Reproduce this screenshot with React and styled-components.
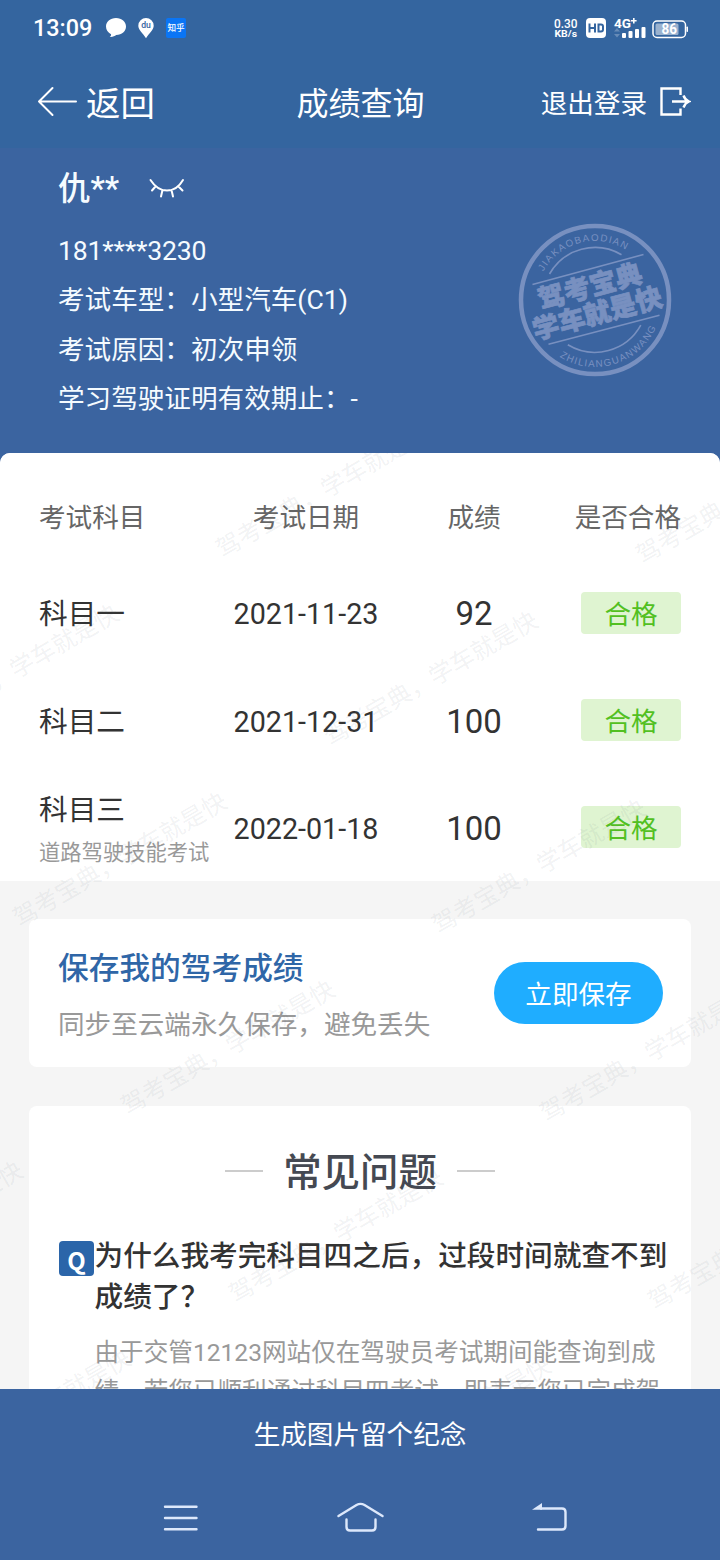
import React from "react";
import styled, { createGlobalStyle } from "styled-components";

const GlobalStyle = createGlobalStyle`
  * { box-sizing: border-box; }
  body {
    margin: 0;
    font-family: Roboto, "Noto Sans CJK SC", sans-serif;
    color: #333;
  }
`;

const Screen = styled.div`
  width: 720px;
  height: 1560px;
  display: flex;
  flex-direction: column;
  overflow: hidden;
  background: #3b64a0;
`;

const TopArea = styled.header`
  height: 148px;
  flex: none;
  background: #34659f;
  color: #fff;
`;

const StatusBar = styled.div`
  height: 56px;
  padding: 0 31px 0 33px;
  display: flex;
  align-items: center;
`;

const Clock = styled.span`
  width: 72px;
  font-size: 23.4px;
  font-weight: 500;
  line-height: 56px;
`;

const StatusIcons = styled.svg`
  display: block;
  flex: none;
  margin-left: ${(p) => (p.$end ? "auto" : 0)};
`;

const NavBar = styled.nav`
  height: 92px;
  padding: 0 29px 0 37px;
  display: grid;
  grid-template-columns: 1fr auto 1fr;
  align-items: center;
`;

const NavAction = styled.a`
  display: flex;
  align-items: center;
  justify-self: ${(p) => (p.$end ? "end" : "start")};
  gap: ${(p) => (p.$end ? 12 : 9)}px;
  font-size: ${(p) => (p.$end ? 26.6 : 34.4)}px;
  line-height: 48px;
  svg { display: block; }
`;

const NavLabel = styled.span`
  padding-top: 3px;
`;

const NavTitle = styled.h1`
  margin: 0;
  padding: 3px 7px 0 0;
  font-size: 32px;
  font-weight: 400;
  line-height: 48px;
`;

const Profile = styled.section`
  height: 305px;
  flex: none;
  padding: 17px 47px 0 58px;
  display: flex;
  justify-content: space-between;
  color: #f5fbff;
`;

const ProfileText = styled.div`
  display: flex;
  flex-direction: column;
`;

const NameRow = styled.div`
  display: flex;
  align-items: center;
  gap: 30px;
  height: 48px;
  margin-bottom: 12px;
  font-size: 32.4px;
  font-weight: 500;
  line-height: 49px;
`;

const InfoLine = styled.div`
  height: 49.3px;
  font-size: 26.6px;
  line-height: 51px;
  white-space: nowrap;
  letter-spacing: ${(p) => (p.$tight ? "-0.2px" : "normal")};
`;

const Stamp = styled.svg`
  display: block;
  margin-top: 57px;
  flex: none;
`;

const Content = styled.main`
  position: relative;
  height: 936px;
  flex: none;
  overflow: hidden;
  border-radius: 10px 10px 0 0;
  background: #f5f5f5;
`;

const Results = styled.section`
  height: 428px;
  padding: 24px 39px 0;
  background: #fff;
`;

const ResultRow = styled.div`
  display: grid;
  grid-template-columns: 170px 194px 142px 1fr;
  align-items: center;
  height: ${(p) => (p.$head ? 82 : 107.4)}px;
  font-size: ${(p) => (p.$head ? 26.6 : 28.7)}px;
  color: ${(p) => (p.$head ? "#666" : "#333")};
`;

const Cell = styled.div`
  line-height: 40px;
  padding-top: ${(p) => (p.$flush ? 0 : 3)}px;
  white-space: nowrap;
  text-align: ${(p) => p.$align || "left"};
  font-size: ${(p) => (p.$big ? "33px" : "inherit")};
`;

const Remark = styled.div`
  font-size: 21.3px;
  line-height: 30px;
  padding-top: 8px;
  color: #999;
`;

const Tag = styled.span`
  display: inline-block;
  width: 100px;
  height: 42px;
  border-radius: 4px;
  background: #dff4d1;
  color: #52c022;
  font-size: 26.6px;
  line-height: 45px;
  text-align: center;
  vertical-align: top;
`;

const Card = styled.section`
  margin: 38px 29px 0;
  border-radius: 8px;
  background: #fff;
`;

const SaveCard = styled(Card)`
  height: 148px;
  padding: 0 28px 0 29px;
  display: flex;
  align-items: center;
  justify-content: space-between;
`;

const SaveTitle = styled.h2`
  margin: 0 0 10px;
  padding-top: 8px;
  font-size: 30.7px;
  font-weight: 500;
  line-height: 46px;
  color: #2f66a7;
`;

const SaveNote = styled.p`
  margin: 0;
  font-size: 26.6px;
  line-height: 46px;
  color: #999;
`;

const SaveButton = styled.button`
  width: 169px;
  height: 62px;
  padding: 1px 0 0;
  border: 0;
  border-radius: 31px;
  background: #1fadff;
  color: #fff;
  font: 26.6px/64px Roboto, "Noto Sans CJK SC", sans-serif;
`;

const FaqCard = styled(Card)`
  height: 420px;
  margin-top: 39px;
  padding: 35px 24px 0 30px;
`;

const FaqTitle = styled.h2`
  margin: 0 6px 0 0;
  display: flex;
  align-items: center;
  justify-content: center;
  gap: 20px;
  height: 60px;
  font-size: 38.4px;
  font-weight: 500;
  line-height: 60px;
  color: #454952;
  &::before, &::after {
    content: "";
    width: 38px;
    height: 2px;
    background: #ccc;
  }
`;

const FaqTitleText = styled.span`
  padding-top: 3px;
`;

const Question = styled.div`
  display: flex;
  align-items: flex-start;
  margin-top: 35px;
  font-size: 28.65px;
  font-weight: 500;
  line-height: 41px;
  white-space: nowrap;
`;

const QMark = styled.span`
  flex: none;
  width: 35px;
  height: 35px;
  margin: 5px 0.5px 0 0;
  border-radius: 4px;
  background: #2b65a9;
  color: #fff;
  font: 700 24px/38px "Noto Sans CJK SC", sans-serif;
  text-align: center;
`;

const Answer = styled.p`
  margin: 15px 0 0 35.5px;
  font-size: 24.6px;
  line-height: 39px;
  color: #999;
  white-space: nowrap;
`;

const Watermark = styled.span`
  position: absolute;
  left: ${(p) => p.$x}px;
  top: ${(p) => p.$y}px;
  transform: translate(-50%, -50%) rotate(-30deg);
  font-size: 24.2px;
  line-height: 30px;
  white-space: nowrap;
  color: rgba(70, 85, 105, 0.085);
  pointer-events: none;
`;

const KeepsakeButton = styled.div`
  height: 88px;
  flex: none;
  color: #fff;
  font-size: 26.6px;
  line-height: 91px;
  text-align: center;
`;

const SystemNav = styled.footer`
  flex: 1;
  padding: 0 151px 0 162px;
  display: flex;
  align-items: flex-start;
  justify-content: space-between;
  svg { display: block; margin-top: 22px; }
`;

const rows = [
  { name: "科目一", date: "2021-11-23", score: "92" },
  { name: "科目二", date: "2021-12-31", score: "100" },
  { name: "科目三", date: "2022-01-18", score: "100", remark: "道路驾驶技能考试" },
];

/* Only the marks that reach into the visible area: [row, column] on a slanted grid. */
const watermarks = [
  [-2, 0], [-2, 1], [-2, 2],
  [-1, 0], [-1, 1],
  [0, 0], [0, 1],
  [1, 0], [1, 1],
  [2, -1], [2, 0], [2, 1],
  [3, -1], [3, 0],
].map(([r, c]) => ({ x: 119.5 + 108 * r + 419.5 * c, y: 407 + 188 * r + 6.7 * c }));

function NotificationIcons() {
  return (
    <StatusIcons width="84" height="24" viewBox="105 16 84 24">
      <path d="M116 18c-5.800 0-10 3.700-10 8.600 0 3.500 2 6.200 5 7.600.3 1.200-.3 2-1.300 2.700 3 .2 5-.6 6.500-1.800 5.700-.1 9.800-3.700 9.800-8.500C126 21.700 121.800 18 116 18Z" fill="#fff" />
      <path d="M146 18a7.700 7.700 0 0 0-7.700 7.700c0 4.300 4.700 7.300 7.700 12.500 3-5.200 7.700-8.200 7.700-12.500A7.700 7.700 0 0 0 146 18Z" fill="#fff" />
      <text x="146" y="28" textAnchor="middle" fontSize="8.600" fontWeight="500" fill="#34659f">du</text>
      <rect x="166" y="18" width="20" height="20" rx="2" fill="#0a75f5" />
      <text x="176" y="31.200" textAnchor="middle" fontSize="8.600" fontWeight="500" fill="#fff">知乎</text>
    </StatusIcons>
  );
}

function SignalIcons() {
  return (
    <StatusIcons $end width="138" height="26" viewBox="551 15 138 26">
      <g fill="#fff" fontWeight="700">
        <text x="554" y="27.500" fontSize="12" fontWeight="500" textLength="23.500" lengthAdjust="spacingAndGlyphs">0.30</text>
        <text x="554.500" y="37.300" fontSize="9.800" textLength="22.500" lengthAdjust="spacingAndGlyphs">KB/s</text>
        <rect x="586" y="18" width="20" height="20" rx="4" />
        <g fill="none" stroke="#34659f" strokeWidth="2">
          <path d="M589.500 23.500v9M595 23.500v9M589.500 28h5.500M598.500 24.500h2.500q2 0 2 2v3q0 2-2 2h-2.500z" />
        </g>
        <text x="614" y="27.800" fontSize="13.400" textLength="17" lengthAdjust="spacingAndGlyphs">4G</text>
        <path d="M631 20h2v-2h1.600v2h2v1.600h-2v2H633v-2h-2z" />
        <rect x="622" y="33" width="4" height="5" rx="1" />
        <rect x="628.500" y="31" width="4" height="7" rx="1" />
        <rect x="635" y="29" width="4" height="9" rx="1" />
        <rect x="641.500" y="27" width="4" height="11" rx="1" />
        <path d="m617 28 3 3.500h-6zM617 37.500l-3-3.500h6z" opacity=".25" />
        <rect x="653" y="21" width="32.500" height="16.500" rx="4" fill="none" stroke="#fff" strokeWidth="1.500" />
        <rect x="655.500" y="23.500" width="23" height="11.500" rx="1.500" opacity=".5" />
        <rect x="686.500" y="26.500" width="1.500" height="5.500" rx=".7" />
        <text x="661.500" y="34.300" fontSize="14" textLength="15.500" lengthAdjust="spacingAndGlyphs">86</text>
      </g>
    </StatusIcons>
  );
}

function ExamStamp() {
  return (
    <Stamp width="156" height="156" viewBox="17.500 12.500 156 156" fill="none" stroke="#7890c0" strokeWidth="1.600">
      <defs>
        <path id="stampTop" d="M43.900 61.900A59 59 0 0 1 154.500 90.500" />
        <path id="stampBottom" d="M60 147.300A67 67 0 0 0 162.500 90.500" />
      </defs>
      <circle cx="95.500" cy="90.500" r="74" strokeWidth="4.500" />
      <path d="M33 75 144 45M49 134.700l111-29" />
      <path d="M50 64.500A52.400 52.400 0 0 1 122 45.200M68.300 135.300A52.400 52.400 0 0 0 141.300 115.700" />
      <g fill="#7890c0" stroke="none" fontFamily="Liberation Sans, sans-serif" fontSize="9.800">
        <text textLength="95"><textPath href="#stampTop" textLength="95">JIAKAOBAODIAN</textPath></text>
        <text textLength="114"><textPath href="#stampBottom" textLength="114">ZHILIANGUANWANG</textPath></text>
      </g>
      <g fill="#7890c0" strokeWidth=".7" fontFamily="Noto Sans CJK SC, sans-serif" fontSize="26.600" fontWeight="900" textAnchor="middle">
        <text transform="translate(90.500 77) rotate(-15)" y="9.500">驾考宝典</text>
        <text transform="translate(97.700 104) rotate(-15)" y="9.500">学车就是快</text>
      </g>
    </Stamp>
  );
}

export default function App() {
  return (
    <Screen>
      <GlobalStyle />
      <TopArea>
        <StatusBar>
          <Clock>13:09</Clock>
          <NotificationIcons />
          <SignalIcons />
        </StatusBar>
        <NavBar>
          <NavAction>
            <svg width="40" height="32" viewBox="0 0 40 32" fill="none" stroke="#fff" strokeWidth="2" strokeLinecap="round" strokeLinejoin="round">
              <path d="M39 15.500H2M15.500 2 2 15.500 15.500 29" />
            </svg>
            <NavLabel>返回</NavLabel>
          </NavAction>
          <NavTitle>成绩查询</NavTitle>
          <NavAction $end>
            <NavLabel>退出登录</NavLabel>
            <svg width="32" height="32" viewBox="0 0 32 32" fill="none" stroke="#fff" strokeWidth="2.400">
              <path d="M21.500 9V2.500H2.500v26h19v-6M13 15.500h16M24.500 9.500q1.500 4.500 5.500 6-4 1.500-5.500 6" />
            </svg>
          </NavAction>
        </NavBar>
      </TopArea>

      <Profile>
        <ProfileText>
          <NameRow>
            仇**
            <svg width="36" height="22" viewBox="0 0 36 22" fill="none" stroke="#fff" strokeWidth="2" strokeLinecap="round">
              <path d="M1.500 2C6 9 11 12.500 18 12.500S30 9 34 2M6.500 8.500 3 12.500M13.500 12l-1.500 6.500M22.500 12l1.500 6.500M29.500 8.500l4 4" />
            </svg>
          </NameRow>
          <InfoLine $tight>181****3230</InfoLine>
          <InfoLine>考试车型：小型汽车(C1)</InfoLine>
          <InfoLine>考试原因：初次申领</InfoLine>
          <InfoLine>学习驾驶证明有效期止：-</InfoLine>
        </ProfileText>
        <ExamStamp />
      </Profile>

      <Content>
        <Results>
          <ResultRow $head>
            <Cell $flush>考试科目</Cell>
            <Cell $flush $align="center">考试日期</Cell>
            <Cell $flush $align="center">成绩</Cell>
            <Cell $flush $align="right">是否合格</Cell>
          </ResultRow>
          {rows.map((row) => (
            <ResultRow key={row.name}>
              <Cell>
                {row.name}
                {row.remark && <Remark>{row.remark}</Remark>}
              </Cell>
              <Cell $align="center">{row.date}</Cell>
              <Cell $align="center" $big>{row.score}</Cell>
              <Cell $flush $align="right"><Tag>合格</Tag></Cell>
            </ResultRow>
          ))}
        </Results>

        <SaveCard>
          <div>
            <SaveTitle>保存我的驾考成绩</SaveTitle>
            <SaveNote>同步至云端永久保存，避免丢失</SaveNote>
          </div>
          <SaveButton>立即保存</SaveButton>
        </SaveCard>

        <FaqCard>
          <FaqTitle><FaqTitleText>常见问题</FaqTitleText></FaqTitle>
          <Question>
            <QMark>Q</QMark>
            <span>为什么我考完科目四之后，过段时间就查不到<br />成绩了？</span>
          </Question>
          <Answer>
            由于交管12123网站仅在驾驶员考试期间能查询到成<br />
            绩，若您已顺利通过科目四考试，即表示您已完成驾
          </Answer>
        </FaqCard>

        {watermarks.map((w, i) => (
          <Watermark key={i} $x={w.x} $y={w.y}>驾考宝典，学车就是快</Watermark>
        ))}
      </Content>

      <KeepsakeButton>生成图片留个纪念</KeepsakeButton>
      <SystemNav>
        <svg width="38" height="40" viewBox="162 1499 38 40" fill="none" stroke="#dde8fb" strokeWidth="2.400" strokeLinecap="round">
          <path d="M165 1506.700h31.500M165 1518h31.500M165 1529.300h31.500" />
        </svg>
        <svg width="59" height="40" viewBox="336 1499 59 40" fill="none" stroke="#dde8fb" strokeWidth="2.400" strokeLinecap="round">
          <path d="m338.500 1516 18-11q4-2.200 8 0l18 11M346.500 1519.500v7.500q0 3.500 3.500 3.500h22q3.500 0 3.500-3.500v-7.500" />
        </svg>
        <svg width="38" height="40" viewBox="531 1499 38 40" fill="none" stroke="#dde8fb" strokeWidth="2.400" strokeLinecap="round">
          <path d="M541 1508.500h21q3.500 0 3.500 3.500v14q0 3.500-3.500 3.500h-24" />
          <path d="m532 1509.700 10-6.700v6.700z" fill="#dde8fb" stroke="none" />
        </svg>
      </SystemNav>
    </Screen>
  );
}
